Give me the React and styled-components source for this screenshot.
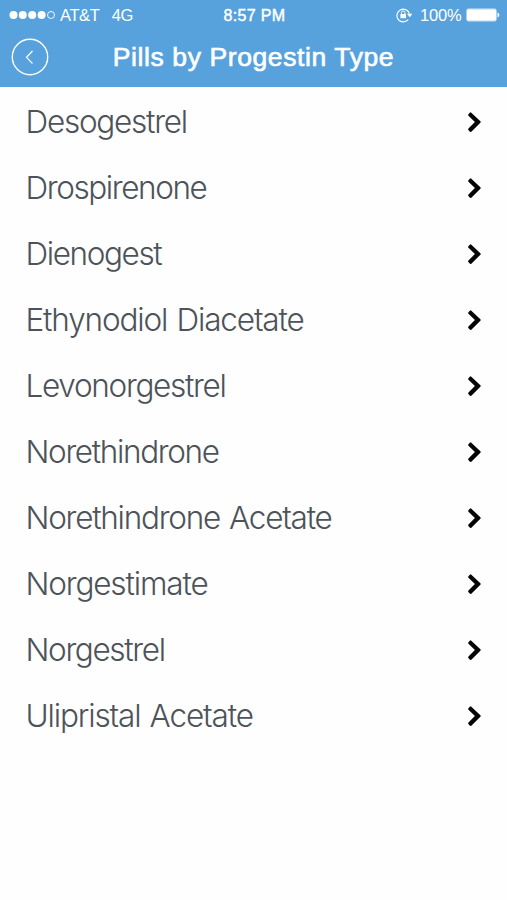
import React from "react";
import styled, { createGlobalStyle } from "styled-components";

const GlobalStyle = createGlobalStyle`
  * { box-sizing: border-box; }
  body { margin: 0; background: #fefefe; }
`;

const Screen = styled.main`
  width: 507px;
  height: 900px;
  overflow: hidden;
  background: #fefefe;
  font-family: Inter, "Liberation Sans", sans-serif;
`;

const Header = styled.header`
  height: 87px;
  background: #57a2dd;
  color: #fff;
  font-family: "Liberation Sans", sans-serif;
`;

const StatusBar = styled.div`
  display: grid;
  grid-template-columns: 1fr auto 1fr;
  align-items: center;
  height: 30px;
  padding: 0 7px 0 9px;
  font-size: 16.5px;
  line-height: 20px;
  white-space: nowrap;
`;

const StatusGroup = styled.div`
  display: flex;
  align-items: center;
  justify-content: ${({ $end }) => ($end ? "flex-end" : "flex-start")};
`;

const StatusText = styled.span`
  letter-spacing: ${({ $spacing }) => $spacing || 0}px;
  margin-left: ${({ $gap }) => $gap || 0}px;
`;

const Clock = styled.time`
  padding-top: 1px;
  font-size: 16px;
  letter-spacing: 0.35px;
  -webkit-text-stroke: 0.45px #fff;
`;

const Icon = styled.svg`
  display: block;
  flex: none;
  margin-left: ${({ $gap }) => $gap || 0}px;
`;

const NavBar = styled.div`
  display: grid;
  grid-template-columns: 60px 1fr 60px;
  align-items: center;
  height: 54px;
`;

const BackButton = styled.button`
  display: flex;
  width: 38px;
  height: 38px;
  margin-left: 11px;
  padding: 0;
  border: 0;
  background: none;
`;

const Title = styled.h1`
  margin: 0;
  text-align: center;
  font-size: 26.5px;
  line-height: 32px;
  font-weight: 400;
  letter-spacing: ${({ $spacing }) => $spacing}px;
  -webkit-text-stroke: 0.65px #fff;
  white-space: nowrap;
`;

const List = styled.ul`
  margin: 0;
  padding: 2px 0 0;
  list-style: none;
`;

const Row = styled.li`
  display: flex;
  align-items: center;
  justify-content: space-between;
  height: 66px;
  padding: 0 25px 0 25.5px;
`;

const Name = styled.span`
  color: #4d5359;
  font-size: 31.5px;
  font-weight: 300;
  line-height: 40px;
  letter-spacing: ${({ $spacing }) => $spacing}px;
  word-spacing: 1.5px;
  white-space: nowrap;
`;

const pills = [
  ["Desogestrel", -1.25],
  ["Drospirenone", -1.4],
  ["Dienogest", -1.4],
  ["Ethynodiol Diacetate", -1.15],
  ["Levonorgestrel", -1.3],
  ["Norethindrone", -1.35],
  ["Norethindrone Acetate", -1.25],
  ["Norgestimate", -1.15],
  ["Norgestrel", -1.35],
  ["Ulipristal Acetate", -1.15],
];

const Signal = () => (
  <Icon width="47" height="10" viewBox="0 0 47 10" fill="#fff">
    {[4.5, 13.8, 23.2, 32.6].map((x) => <circle key={x} cx={x} cy="5" r="4" />)}
    <circle cx="42" cy="5" r="3.5" fill="none" stroke="#fff" strokeWidth="0.9" />
  </Icon>
);

const RotationLock = () => (
  <Icon width="17" height="16" viewBox="0 0 17 16" fill="none" stroke="#fff">
    <path d="M12.2 12.7A6.4 6.4 0 1 1 13.4 6.5" strokeWidth="1.2" />
    <path d="M11 6.7h5.4l-2.7 3.5z" fill="#fff" stroke="none" />
    <rect x="4.4" y="7" width="5.6" height="4.2" fill="#fff" stroke="none" />
    <path d="M5.5 7V5.6a1.7 1.7 0 0 1 3.4 0V7" strokeWidth="1" />
  </Icon>
);

const Battery = () => (
  <Icon $gap={4.5} width="34" height="14" viewBox="0 0 34 14">
    <rect x="0.5" y="0.8" width="30" height="12.4" rx="2" fill="none" stroke="#fff" strokeOpacity="0.5" />
    <rect x="1" y="1.3" width="29" height="11.4" rx="1.2" fill="#fff" />
    <path d="M31.5 4.5c2.4.8 2.4 4.2 0 5z" fill="#fff" />
  </Icon>
);

const Chevron = () => (
  <Icon width="15" height="21" viewBox="0 0 15 21">
    <path
      d="M3.9 0.3L13.3 8.8Q14.2 9.6 13.3 10.4L3.9 19.3Q3 20 2.2 19.2L0.8 17.6Q0.1 16.8 0.9 16L7.6 9.6L0.9 3.4Q0.1 2.6 0.9 1.8L2.3 0.3Q3.1-.4 3.9.3z"
      transform="translate(0.6 0.4) scale(0.96 1)"
      fill="#050505"
    />
  </Icon>
);

export default function App() {
  return (
    <Screen>
      <GlobalStyle />
      <Header>
        <StatusBar>
          <StatusGroup>
            <Signal />
            <StatusText $gap={4} $spacing={-0.4}>AT&amp;T</StatusText>
            <StatusText $gap={12.5} $spacing={-0.5}>4G</StatusText>
          </StatusGroup>
          <Clock>8:57 PM</Clock>
          <StatusGroup $end>
            <RotationLock />
            <StatusText $gap={7} $spacing={-0.2}>100%</StatusText>
            <Battery />
          </StatusGroup>
        </StatusBar>
        <NavBar>
          <BackButton aria-label="Back">
            <Icon width="38" height="38" viewBox="0 0 38 38" fill="none" stroke="#fff">
              <circle cx="19" cy="19" r="17.7" strokeWidth="1.4" />
              <path d="M21.5 13l-6 6.3 6 6.2" strokeWidth="1.2" />
            </Icon>
          </BackButton>
          <Title $spacing={0.6}>Pills by Progestin Type</Title>
        </NavBar>
      </Header>
      <List>
        {pills.map(([name, spacing]) => (
          <Row key={name}>
            <Name $spacing={spacing}>{name}</Name>
            <Chevron />
          </Row>
        ))}
      </List>
    </Screen>
  );
}
